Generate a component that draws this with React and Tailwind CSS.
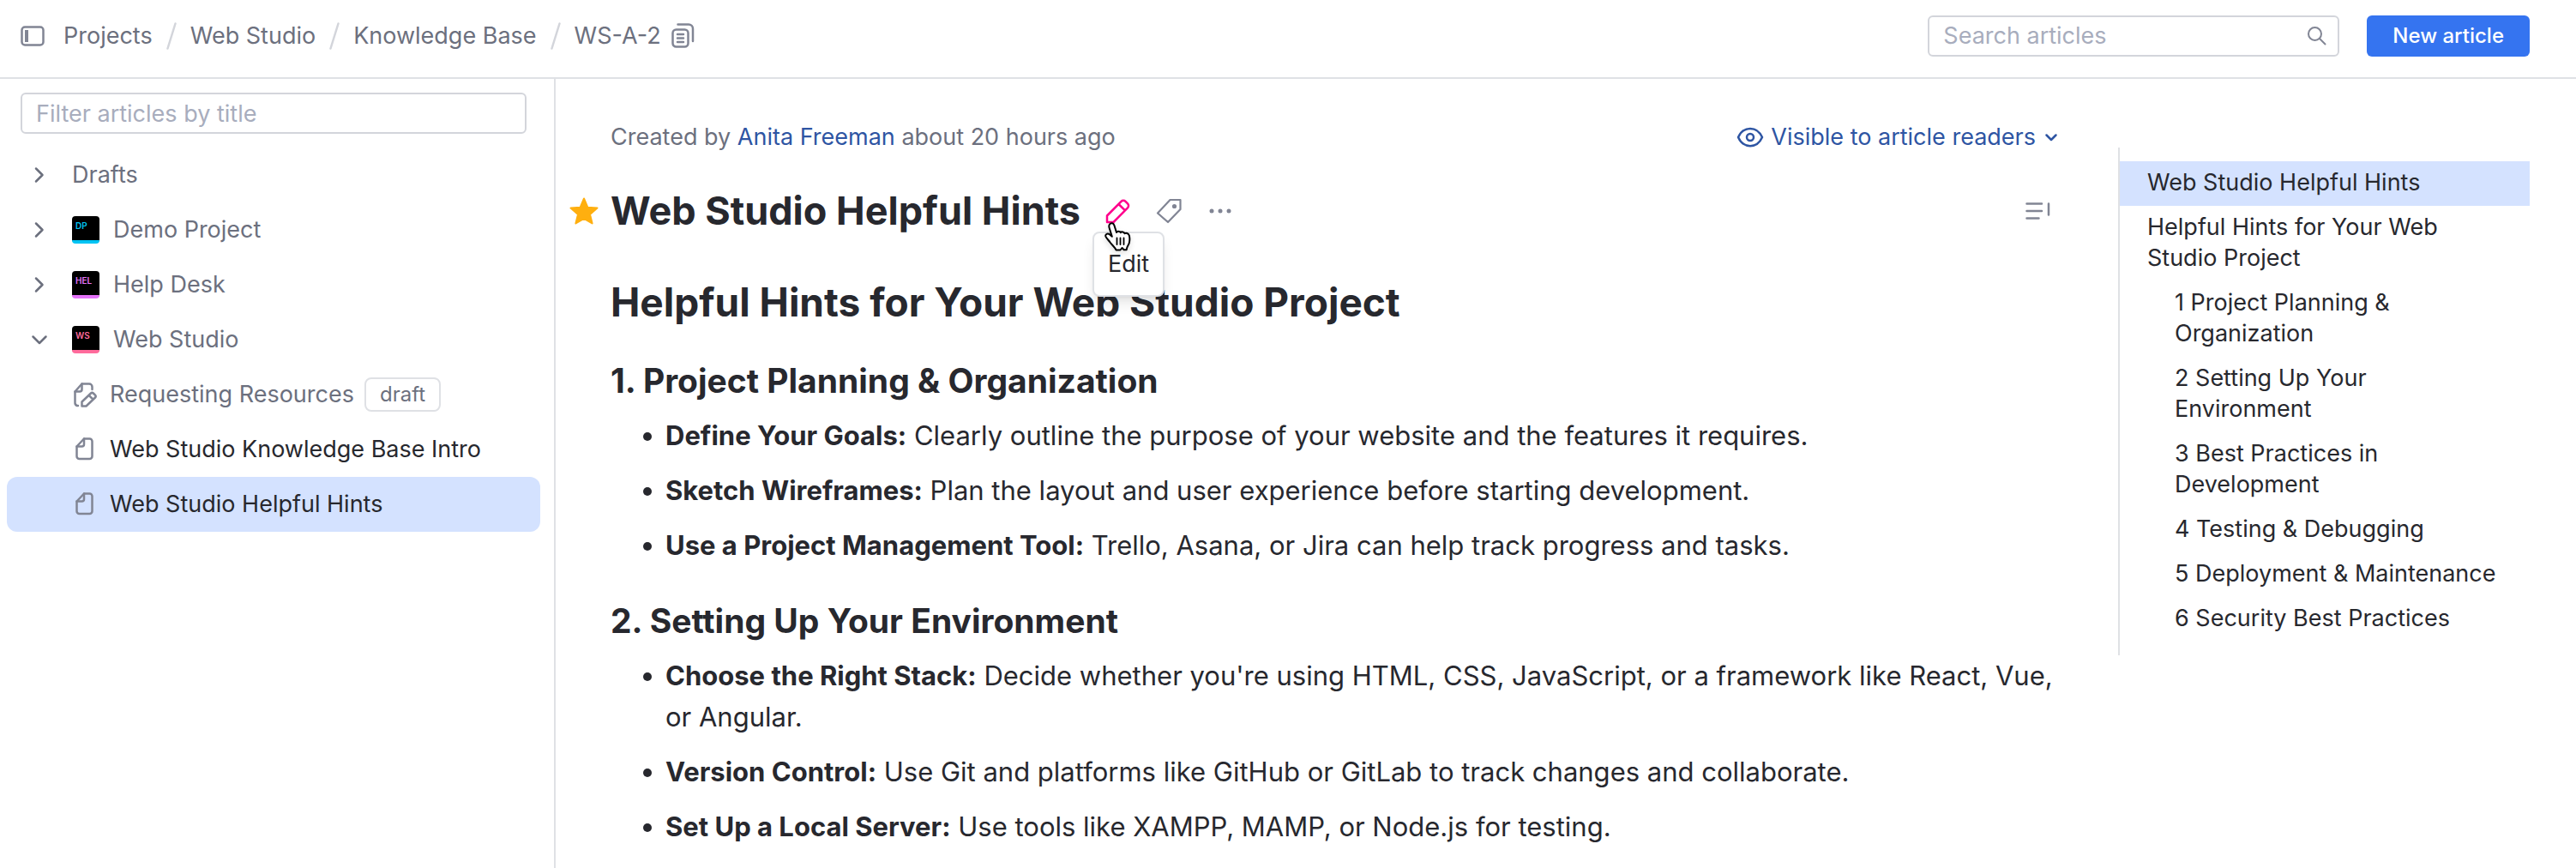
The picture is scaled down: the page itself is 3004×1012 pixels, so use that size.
import { useState } from "react";

const crumbs = ["Projects", "Web Studio", "Knowledge Base"];

const projects = [
  { name: "Demo Project", code: "DP", text: "text-[#00c4f4]", bar: "border-[#00c4f4]" },
  { name: "Help Desk", code: "HEL", text: "text-[#e573fa]", bar: "border-[#e573fa]" },
  { name: "Web Studio", code: "WS", text: "text-[#ff6b9c]", bar: "border-[#ff6b9c]", open: true },
];

const articles = [
  { title: "Requesting Resources", draft: true },
  { title: "Web Studio Knowledge Base Intro" },
  { title: "Web Studio Helpful Hints", selected: true },
];

const sections = [
  {
    title: "1. Project Planning & Organization",
    items: [
      ["Define Your Goals:", "Clearly outline the purpose of your website and the features it requires."],
      ["Sketch Wireframes:", "Plan the layout and user experience before starting development."],
      ["Use a Project Management Tool:", "Trello, Asana, or Jira can help track progress and tasks."],
    ],
  },
  {
    title: "2. Setting Up Your Environment",
    items: [
      ["Choose the Right Stack:", "Decide whether you're using HTML, CSS, JavaScript, or a framework like React, Vue, or Angular."],
      ["Version Control:", "Use Git and platforms like GitHub or GitLab to track changes and collaborate."],
      ["Set Up a Local Server:", "Use tools like XAMPP, MAMP, or Node.js for testing."],
    ],
  },
];

const outline = [
  { label: "Web Studio Helpful Hints", active: true },
  { label: "Helpful Hints for Your Web Studio Project" },
  { label: "1 Project Planning & Organization", nested: true },
  { label: "2 Setting Up Your Environment", nested: true },
  { label: "3 Best Practices in Development", nested: true },
  { label: "4 Testing & Debugging", nested: true },
  { label: "5 Deployment & Maintenance", nested: true },
  { label: "6 Security Best Practices", nested: true },
];

function Icon({ className, box, children, width = 2.5 }) {
  return (
    <svg className={className} viewBox={box} fill="none" stroke="currentColor" strokeWidth={width} strokeLinecap="round" strokeLinejoin="round" aria-hidden="true">
      {children}
    </svg>
  );
}

function Chevron({ open }) {
  return (
    <Icon className="w-6 h-6 shrink-0 text-[#6c707e]" box="0 0 24 24">
      {open ? <path d="M4.500 8.500l7.500 7.500 7.500-7.500" /> : <path d="M8 4.500l7.500 7.500-7.500 7.500" />}
    </Icon>
  );
}

function ArticleIcon({ draft }) {
  if (draft) {
    return (
      <Icon className="w-8 h-8 shrink-0 text-[#818594]" box="0 0 32 32">
        <path d="M7 29H6A3.500 3.500 0 0 1 3.500 26V12.500L11.500 3.500H20A3.500 3.500 0 0 1 23.500 7V10" />
        <path d="M3.500 12.500H9A2.500 2.500 0 0 0 11.500 10V3.500" />
        <path d="M11.500 29.500V24.500L22 14.500A2 2 0 0 1 24.800 14.500L27 16.700A2 2 0 0 1 27 19.500L16.500 29.500ZM19.800 17.200L24.400 21.500" />
      </Icon>
    );
  }
  return (
    <Icon className="w-8 h-8 shrink-0 text-[#818594]" box="0 0 32 32">
      <path d="M5.500 12.500L14 3.500H20.500A3 3 0 0 1 23.500 6.500V24A3 3 0 0 1 20.500 27H8.500A3 3 0 0 1 5.500 24Z" />
      <path d="M5.500 12.500H11.500A2.500 2.500 0 0 0 14 10V3.500" />
    </Icon>
  );
}

function Header() {
  return (
    <header className="flex h-[92px] items-start justify-between border-b-2 border-[#dfe1e5] pl-6 pr-[54px] pt-[18px]">
      <nav className="flex h-12 items-center text-[#6c707e]" aria-label="Breadcrumb">
        <button className="mr-[22px] text-[#818594]" aria-label="Toggle sidebar">
          <Icon className="w-7 h-6" box="0 0 28 24">
            <rect x="1.500" y="1.500" width="25" height="21" rx="3.500" />
            <path d="M7 7v10" strokeWidth="4" strokeLinecap="square" />
          </Icon>
        </button>
        {crumbs.map((c) => (
          <div key={c} className="flex items-center">
            <a href="#">{c}</a>
            <Icon className="mx-4 w-3 h-8 text-[#d3d5db]" box="0 0 12 32">
              <path d="M10.500 1.500L1.500 30.500" />
            </Icon>
          </div>
        ))}
        <a href="#">WS-A-2</a>
        <button className="ml-3 text-[#818594]" aria-label="Copy article ID">
          <Icon className="w-7 h-8" box="0 0 28 32">
            <rect x="1.500" y="8.500" width="18" height="20" rx="4" />
            <path d="M7.500 2.500H20A5 5 0 0 1 25 7.500V22M7 14h7M7 18.500h7M7 23h7" />
          </Icon>
        </button>
      </nav>
      <div className="flex gap-8">
        <label className="flex h-12 w-[480px] items-center rounded-md border-2 border-[#d3d5db] pl-4 pr-3">
          <input className="min-w-0 flex-1 outline-none placeholder:text-[#a8adbd]" placeholder="Search articles" aria-label="Search articles" />
          <Icon className="w-6 h-6 text-[#818594]" box="0 0 24 24" width={2}>
            <circle cx="9.500" cy="9.500" r="7.500" />
            <path d="M15 15L21.500 21.500" />
          </Icon>
        </label>
        <button className="h-12 rounded-md bg-[#3574f0] px-[30px] text-[24px] font-medium text-white">New article</button>
      </div>
    </header>
  );
}

function Sidebar({ filter, setFilter }) {
  return (
    <aside className="w-[648px] shrink-0 border-r-2 border-[#dfe1e5] pt-4">
      <div className="pl-6 pr-8">
        <input
          className="h-12 w-full rounded-md border-2 border-[#d3d5db] px-4 outline-none placeholder:text-[#a8adbd]"
          placeholder="Filter articles by title"
          aria-label="Filter articles by title"
          value={filter}
          onChange={(e) => setFilter(e.target.value)}
        />
      </div>
      <ul className="mt-4 pl-2 pr-4 text-[#6c707e]">
        <li className="flex h-16 items-center pl-[26px]">
          <Chevron />
          <a href="#" className="ml-[26px]">Drafts</a>
        </li>
        {projects.map((p) => (
          <li key={p.code} className="flex h-16 items-center pl-[26px]">
            <Chevron open={p.open} />
            <span className={`ml-[26px] mr-4 h-8 w-8 shrink-0 overflow-hidden rounded-sm border-b-4 bg-black pl-1 pt-1 text-[10px] leading-[14px] font-semibold ${p.text} ${p.bar}`}>{p.code}</span>
            <a href="#">{p.name}</a>
          </li>
        ))}
        {articles.map((a) => (
          <li key={a.title} className={`flex h-16 items-center rounded-xl pl-[76px] ${a.selected ? "bg-[#d4e2ff]" : ""}`}>
            <ArticleIcon draft={a.draft} />
            <a href="#" className={`ml-3 whitespace-nowrap ${a.draft ? "" : "text-[#27282e]"}`}>{a.title}</a>
            {a.draft && <span className="ml-3 flex h-10 items-center rounded-lg border-2 border-[#dfe1e5] px-4 text-[24px]">draft</span>}
          </li>
        ))}
      </ul>
    </aside>
  );
}

function HandCursor() {
  return (
    <svg className="pointer-events-none absolute left-0 top-7 z-20 h-9 w-8 drop-shadow-md" viewBox="0 0 32 36" aria-hidden="true">
      <path
        d="M6 3.500C7.500 1.300 10.600 2 11.400 4.700L14 13C14.600 11.300 18 11.200 18.800 13.200C19.800 11.800 22.800 12.200 23.500 14.300C25 13.200 28 13.800 28.800 16.500C29.800 20 29.500 22.500 28.700 25.500C28 28 26 29 25.700 33.300H22.700L20.500 31L18.500 33.500H13.500C12.500 30.500 9 28 6.500 24.500C5 22 1.500 19.500 1.200 17.200C1 15 3.500 13.800 5.800 15.200L8.800 17.800L5.700 8C5.200 6.500 5 4.900 6 3.500Z"
        fill="white" stroke="black" strokeWidth="2" strokeLinejoin="round"
      />
      <path d="M14.500 19.500V27M18.500 19.500V27M22.500 19.500V27" stroke="black" strokeWidth="1.800" strokeLinecap="round" />
    </svg>
  );
}

function Article() {
  return (
    <main className="min-w-0 flex-1 pl-4 pt-[50px] text-[#27282e]">
      <div className="flex items-center justify-between pl-12 pr-4 text-[#6c707e]">
        <p>Created by <a href="#" className="text-[#2e55a3]">Anita Freeman</a> about 20 hours ago</p>
        <button className="flex items-center text-[#2e55a3]">
          <Icon className="mr-2 h-6 w-8" box="0 0 32 24">
            <path d="M2 12C8 -1.500 24 -1.500 30 12C24 25.500 8 25.500 2 12Z" />
            <circle cx="16" cy="12" r="4" />
          </Icon>
          Visible to article readers
          <Icon className="ml-2.5 h-4 w-4" box="0 0 16 16">
            <path d="M2.500 5.500L8 11l5.500-5.500" />
          </Icon>
        </button>
      </div>

      <div className="mt-10 flex items-center justify-between">
        <div className="flex items-center">
          <button className="mr-3.5 text-[#ffaf0f]" aria-label="Remove star">
            <svg className="h-8 w-[34px]" viewBox="0 0 34 32" fill="currentColor" stroke="currentColor" strokeWidth="2" strokeLinejoin="round" aria-hidden="true">
              <path d="M17 1.500L21.300 11.700L32.500 12.600L24 19.900L26.600 30.500L17 24.800L7.400 30.500L10 19.900L1.500 12.600L12.700 11.700Z" />
            </svg>
          </button>
          <h1 className="text-[45px] leading-[56px] font-bold">Web Studio Helpful Hints</h1>
          <div className="ml-7 flex items-center gap-7 text-[#818594]">
            <div className="relative flex">
              <button className="text-[#ff008c]" aria-label="Edit">
                <Icon className="h-8 w-8" box="0 0 32 32">
                  <path d="M3 29V21.500L19.500 4.800A3.500 3.500 0 0 1 24.500 4.800L27 7.300A3.500 3.500 0 0 1 27 12.300L10.500 29ZM16.500 8L24 15.300" />
                </Icon>
              </button>
              <div role="tooltip" className="absolute -left-3.5 top-10 z-10 flex h-[76px] items-center rounded-lg border-2 border-[#dfe1e5] bg-white px-4 text-[#27282e] shadow-lg">Edit</div>
              <HandCursor />
            </div>
            <button aria-label="Add tag">
              <Icon className="h-8 w-8" box="0 0 32 32" width={2.2}>
                <path d="M16.500 3H28.500V14L14 29L2 18.500Z" />
                <circle cx="21.500" cy="10.500" r="1.500" fill="currentColor" />
              </Icon>
            </button>
            <button aria-label="More actions">
              <svg className="h-8 w-8" viewBox="0 0 32 32" fill="currentColor" aria-hidden="true">
                <circle cx="5" cy="16" r="2.500" />
                <circle cx="15" cy="16" r="2.500" />
                <circle cx="25" cy="16" r="2.500" />
              </svg>
            </button>
          </div>
        </div>
        <button className="mr-6 text-[#818594]" aria-label="Hide table of contents">
          <Icon className="h-6 w-8" box="0 0 32 24">
            <path d="M3.500 3.500h17.500M3.500 12h17.500M3.500 20.500h14M29 3.500v13" />
          </Icon>
        </button>
      </div>

      <article className="pl-12">
        <h2 className="mt-[50px] text-[46px] leading-[56px] font-bold">Helpful Hints for Your Web Studio Project</h2>
        {sections.map((s) => (
          <section key={s.title} className="mt-10">
            <h3 className="text-[39px] leading-[48px] font-bold">{s.title}</h3>
            <ul className="mt-4 flex list-none flex-col gap-4 pl-9 text-[31px] leading-[48px]">
              {s.items.map(([name, text]) => (
                <li key={name} className="flex gap-4">
                  <span className="mt-5 ml-0.5 h-2.5 w-2.5 shrink-0 rounded-full bg-[#27282e]" />
                  <p><strong>{name}</strong> {text}</p>
                </li>
              ))}
            </ul>
          </section>
        ))}
      </article>
    </main>
  );
}

function Outline() {
  return (
    <nav className="ml-[54px] mr-[54px] mt-20 w-[480px] shrink-0 self-start border-l-2 border-[#dfe1e5] py-4 text-[#27282e]" aria-label="Table of contents">
      {outline.map((o) => (
        <a key={o.label} href="#" className={`block pt-[7px] pb-[9px] pr-8 ${o.nested ? "pl-16" : "pl-8"} ${o.active ? "bg-[#d4e2ff]" : ""}`}>{o.label}</a>
      ))}
    </nav>
  );
}

export default function App() {
  const [filter, setFilter] = useState("");

  return (
    <div className="flex min-h-screen flex-col bg-white font-['Inter',sans-serif] text-[27px] leading-[36px]">
      <Header />
      <div className="flex flex-1">
        <Sidebar filter={filter} setFilter={setFilter} />
        <Article />
        <Outline />
      </div>
    </div>
  );
}
